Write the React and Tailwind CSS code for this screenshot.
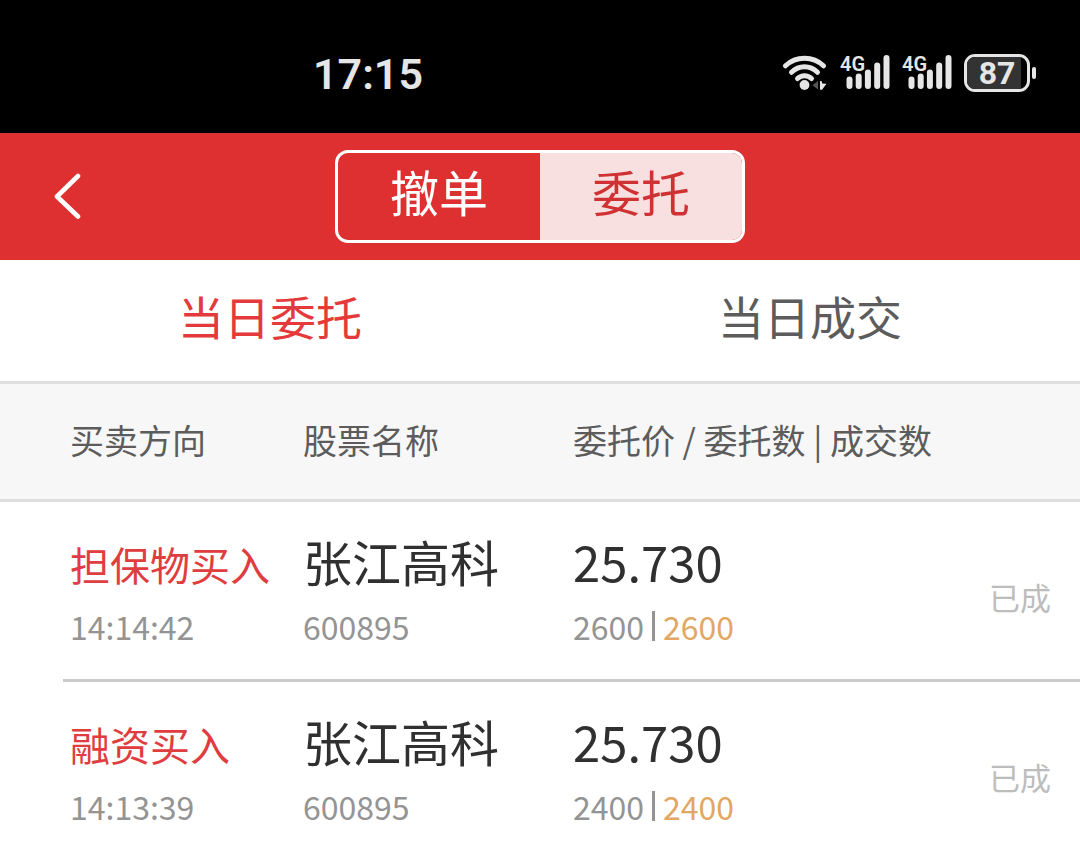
import React, { useState } from 'react';

const orders = [
  { side: '担保物买入', time: '14:14:42', name: '张江高科', code: '600895', price: '25.730', amount: 2600, filled: 2600, status: '已成' },
  { side: '融资买入', time: '14:13:39', name: '张江高科', code: '600895', price: '25.730', amount: 2400, filled: 2400, status: '已成' },
];

function WifiIcon() {
  return (
    <svg className="h-[36px] w-[46px]" viewBox="0 0 46 36" fill="none" stroke="#e6e6e6" strokeWidth="5" strokeLinecap="round">
      <path d="M3.500 10.800C14 .8 31 .8 41.500 10.800" />
      <path d="M9.500 17.300C17 10 28 10 35.500 17.300" />
      <path d="M15.500 23.500C19.500 19.700 25.500 19.700 29.500 23.500" />
      <circle cx="22.500" cy="30" r="4.900" fill="#e6e6e6" stroke="none" />
      <path d="M36 26v8.500l-5.500-4.200z" fill="#555" stroke="none" />
      <path d="M38 26h1.500l.8 2.600 4.200.2-4.500 5.900h-2z" fill="#e6e6e6" stroke="none" />
    </svg>
  );
}

function Signal() {
  return (
    <div className="relative h-[36px] w-[50px]">
      <svg className="h-[36px] w-[50px]" viewBox="0 0 50 36" stroke="#e6e6e6" strokeWidth="6" strokeLinecap="round">
        <path d="M9.500 24.500v6.500M18.700 21.500v9.500M27.900 17.500v13.500M37.200 10.500v20.500M46.500 3v28" />
      </svg>
      <span className="absolute left-0 top-0 font-[Roboto,sans-serif] text-[20px] font-semibold leading-[18px]">4G</span>
    </div>
  );
}

function Battery() {
  return (
    <div className="flex items-center gap-[2px]">
      <div className="relative h-[38px] w-[66px] rounded-[11px] border-[3px] border-[#e6e6e6]">
        <div className="h-full w-[54px] rounded-l-[8px] bg-[#333]" />
        <span className="absolute inset-0 text-center font-[Roboto,sans-serif] text-[32px] font-bold leading-[32px]">87</span>
      </div>
      <div className="h-[12px] w-[4px] rounded-[2px] bg-[#e6e6e6]" />
    </div>
  );
}

export default function App() {
  const [mode, setMode] = useState('委托');
  const [tab, setTab] = useState('当日委托');

  return (
    <div className="min-h-screen bg-white font-['Noto_Sans_CJK_SC',sans-serif]">
      {/* Status bar */}
      <div className="flex h-[133px] items-center justify-between bg-black pl-[313px] pr-[44px] pt-[12px] text-[#e6e6e6]">
        <span className="pt-[2px] font-[Roboto,sans-serif] text-[43px] font-semibold leading-[56px]">17:15</span>
        <div className="flex items-center gap-[12px]">
          <WifiIcon />
          <Signal />
          <Signal />
          <Battery />
        </div>
      </div>

      {/* Header with the mode switch */}
      <header className="grid grid-cols-[1fr_auto_1fr] items-center bg-[#de3031] py-[17px]">
        <button type="button" aria-label="返回" className="ml-[52px] w-[32px]">
          <svg className="h-[48px] w-[32px]" viewBox="0 0 32 48" fill="none" stroke="white" strokeWidth="4.600" strokeLinecap="round" strokeLinejoin="round">
            <path d="M26 3L5 23.500L26 43.500" />
          </svg>
        </button>
        <div className="flex overflow-hidden rounded-[13px] border-[3px] border-white text-[49px] leading-[76px]">
          {['撤单', '委托'].map((m) => (
            <button
              key={m}
              type="button"
              onClick={() => setMode(m)}
              className={`w-[202px] pb-[11px] ${mode === m ? 'bg-[#f9e0e0] text-[#d03233]' : 'text-white'}`}
            >
              {m}
            </button>
          ))}
        </div>
      </header>

      {/* Tabs */}
      <nav className="grid grid-cols-2 text-[46px] leading-[64px]">
        {['当日委托', '当日成交'].map((t) => (
          <button
            key={t}
            type="button"
            onClick={() => setTab(t)}
            className={`pb-[34px] pt-[23px] ${tab === t ? 'text-[#e53a3c]' : 'text-[#5c5c5c]'}`}
          >
            {t}
          </button>
        ))}
      </nav>

      {/* Orders */}
      <table className="block">
        <thead className="block border-y-[3px] border-[#dedede] bg-[#f7f7f7] pl-[63px]">
          <tr className="grid grid-cols-[233px_270px_1fr] pb-[35px] pl-[7px] pt-[32px] text-left text-[34px] leading-[48px] text-[#5c5c5c]">
            <th className="font-normal">买卖方向</th>
            <th className="font-normal">股票名称</th>
            <th className="font-normal">委托价 / 委托数 | 成交数</th>
          </tr>
        </thead>
        <tbody className="block pl-[63px]">
          {orders.map((o) => (
            <tr
              key={o.time}
              className="grid grid-cols-[233px_270px_1fr_auto] border-b-[3px] border-[#cbcbcb] pb-[25px] pl-[7px] pr-[29px] pt-[22px] last:border-b-0"
            >
              <td>
                <div className="text-[46px] leading-[74px]">
                  <span className="text-[40px] leading-none text-[#df3d40]">{o.side}</span>
                </div>
                <div className="text-[32px] leading-[56px] text-[#949494]">{o.time}</div>
              </td>
              <td>
                <div className="text-[49px] leading-[74px] text-[#303030]">{o.name}</div>
                <div className="text-[32px] leading-[56px] text-[#949494]">{o.code}</div>
              </td>
              <td>
                <div className="text-[49px] leading-[74px] text-[#303030]">{o.price}</div>
                <div className="flex items-center gap-[8px] text-[32px] leading-[56px] text-[#949494]">
                  <span>{o.amount}</span>
                  <span className="h-[30px] w-[3px] bg-[#949494]" />
                  <span className="text-[#e2a764]">{o.filled}</span>
                </div>
              </td>
              <td className="self-center pt-[15px] text-[31px] leading-[48px] text-[#bdbdbd]">{o.status}</td>
            </tr>
          ))}
        </tbody>
      </table>
    </div>
  );
}
